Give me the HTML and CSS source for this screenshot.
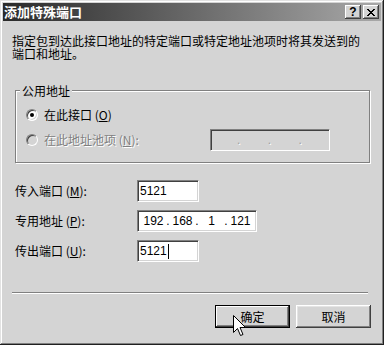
FILE: index.html
```html
<!DOCTYPE html>
<html lang="zh-CN">
<head>
<meta charset="utf-8">
<title>添加特殊端口</title>
<link rel="stylesheet" href="styles.css">
</head>
<body>
<div class="window">
  <div class="titlebar">
    <span class="title">添加特殊端口</span>
    <span class="tbtn help">?</span>
    <span class="tbtn close"><svg width="8" height="7" viewBox="0 0 8 7" shape-rendering="crispEdges"><path fill="#000" d="M0 0h2v1h-2z M6 0h2v1h-2z M1 1h2v1h-2z M5 1h2v1h-2z M2 2h4v1h-4z M3 3h2v1h-2z M2 4h4v1h-4z M1 5h2v1h-2z M5 5h2v1h-2z M0 6h2v1h-2z M6 6h2v1h-2z"/></svg></span>
  </div>
  <div class="body">
    <div class="desc">
      <div class="dline">指定包到达此接口地址的特定端口或特定地址池项时将其发送到的</div>
      <div class="dline">端口和地址。</div>
    </div>
    <div class="group">
      <div class="legend">公用地址</div>
      <div class="radio-row">
        <span class="radio checked"><span class="dot"></span></span>
        <span class="rlabel">在此接口 (<u>O</u>)</span>
      </div>
      <div class="radio-row pool">
        <span class="radio disabled"></span>
        <span class="rlabel disabled-text">在此地址池项 (<u>N</u>):</span>
        <span class="ipbox disabled-box">
          <span class="seg s1"></span><span class="ddot">.</span><span class="seg"></span><span class="ddot">.</span><span class="seg"></span><span class="ddot">.</span><span class="seg"></span>
        </span>
      </div>
    </div>
    <div class="fields">
      <div class="field-row">
        <span class="flabel">传入端口 (<u>M</u>):</span>
        <span class="edit">5121</span>
      </div>
      <div class="field-row">
        <span class="flabel">专用地址 (<u>P</u>):</span>
        <span class="edit ip">
          <span class="oct">192</span><span class="idot">.</span><span class="oct">168</span><span class="idot">.</span><span class="oct">1</span><span class="idot">.</span><span class="oct">121</span>
        </span>
      </div>
      <div class="field-row">
        <span class="flabel">传出端口 (<u>U</u>):</span>
        <span class="edit">5121<span class="caret"></span></span>
      </div>
    </div>
    <div class="sep"></div>
    <div class="buttons">
      <button class="btn default">确定</button>
      <button class="btn">取消</button>
    </div>
  </div>
  <svg class="cursor" width="13" height="22" viewBox="0 0 13 22"><path d="M0.5 0.5 L0.5 17.5 L4.5 13.5 L7.5 20.5 L10 19.5 L7 12.5 L12.5 12.5 Z" fill="#fff" stroke="#000" stroke-width="1"/></svg>
</div>
</body>
</html>
```
FILE: styles.css
```css
* { box-sizing: border-box; }
html, body { margin: 0; padding: 0; }
body {
  width: 384px;
  height: 345px;
  overflow: hidden;
  background: #d4d4d4;
  font-family: "Noto Sans CJK SC", "Liberation Sans", sans-serif;
  font-size: 12px;
  color: #000;
}
.window {
  position: relative;
  width: 384px;
  height: 345px;
  padding: 3px;
  background: #d4d4d4;
  box-shadow: inset -1px -1px #202020, inset 1px 1px #e2e2e2, inset -2px -2px #808080, inset 2px 2px #fff;
}
.titlebar {
  display: flex;
  align-items: center;
  height: 18px;
  padding: 0 2px 0 1px;
  background: linear-gradient(90deg, #2a2a2a 0%, #a8a8a8 100%);
}
.title {
  flex: 1;
  color: #fff;
  font-weight: bold;
  font-size: 13px;
  line-height: 18px;
}
.tbtn {
  display: flex;
  align-items: center;
  justify-content: center;
  width: 16px;
  height: 14px;
  background: #d4d4d4;
  box-shadow: inset -1px -1px #404040, inset 1px 1px #fff, inset -2px -2px #808080;
}
.help {
  margin-right: 2px;
  font-family: "Liberation Sans", sans-serif;
  font-weight: bold;
  font-size: 12px;
  line-height: 14px;
  padding-bottom: 1px;
}
.body {
  padding: 13px 0 0 9px;
}
.desc {
  height: 26px;
}
.dline {
  height: 13px;
  line-height: 13px;
  white-space: nowrap;
}
.group {
  width: 355px;
  height: 73px;
  margin: 30px 0 0 3px;
  border: 1px solid #808080;
  box-shadow: 1px 1px 0 #fff, inset 1px 1px 0 #fff;
}
.legend {
  width: max-content;
  margin: -7px 0 0 4px;
  padding: 0 2px;
  line-height: 14px;
  height: 14px;
  background: #d4d4d4;
}
.radio-row {
  display: flex;
  align-items: center;
  height: 16px;
  margin: 9px 0 0 10px;
}
.radio-row.pool {
  height: 22px;
  margin: 6px 39px 0 10px;
}
.radio {
  display: flex;
  align-items: center;
  justify-content: center;
  width: 12px;
  height: 12px;
  border-radius: 50%;
  background: #fff;
  border: 1px solid;
  border-color: #808080 #fff #fff #808080;
  box-shadow: inset 1px 1px #404040, inset -1px -1px #d4d4d4;
}
.radio.disabled {
  background: #d4d4d4;
}
.dot {
  width: 4px;
  height: 4px;
  border-radius: 50%;
  background: #000;
}
.rlabel {
  margin-left: 6px;
  line-height: 14px;
}
.disabled-text {
  flex: 1;
  color: #808080;
  text-shadow: 1px 1px 0 #fff;
}
.ipbox, .edit {
  display: flex;
  align-items: center;
  height: 22px;
  background: #fff;
  border: 1px solid;
  border-color: #808080 #fff #fff #808080;
  box-shadow: inset 1px 1px #404040, inset -1px -1px #d4d4d4;
  font-family: "Liberation Sans", sans-serif;
  font-size: 12px;
}
.disabled-box {
  width: 120px;
  background: #d4d4d4;
  padding-left: 1px;
}
.seg { width: 27px; }
.seg.s1 { width: 25px; }
.ddot {
  width: 4px;
  text-align: center;
  color: #a0a0a0;
  text-shadow: 1px 1px 0 #fff;
  line-height: 12px;
}
.fields {
  display: flex;
  flex-direction: column;
  gap: 8px;
  margin: 17px 0 0 3px;
}
.field-row {
  display: flex;
  align-items: center;
  height: 22px;
}
.flabel {
  width: 122px;
  line-height: 14px;
}
.edit {
  width: 62px;
  padding-left: 2px;
}
.edit.ip {
  width: 120px;
  padding-left: 3px;
}
.oct {
  width: 25px;
  text-align: center;
}
.idot {
  width: 4px;
  text-align: center;
}
.caret {
  display: inline-block;
  width: 1px;
  height: 15px;
  margin-left: 1px;
  background: #000;
}
.sep {
  width: 356px;
  height: 2px;
  margin-top: 30px;
  border-top: 1px solid #808080;
  border-bottom: 1px solid #fff;
}
.buttons {
  display: flex;
  gap: 6px;
  margin-top: 11px;
  padding-left: 203px;
}
.btn {
  width: 75px;
  height: 23px;
  padding: 0;
  border: none;
  background: #d4d4d4;
  font: inherit;
  color: #000;
  line-height: 21px;
  box-shadow: inset -1px -1px #404040, inset 1px 1px #fff, inset -2px -2px #808080, inset 2px 2px #e4e4e4;
}
.btn.default {
  border: 1px solid #000;
  box-shadow: inset -1px -1px #404040, inset 1px 1px #fff, inset -2px -2px #808080;
}
.cursor {
  position: absolute;
  left: 233px;
  top: 315px;
}
```
